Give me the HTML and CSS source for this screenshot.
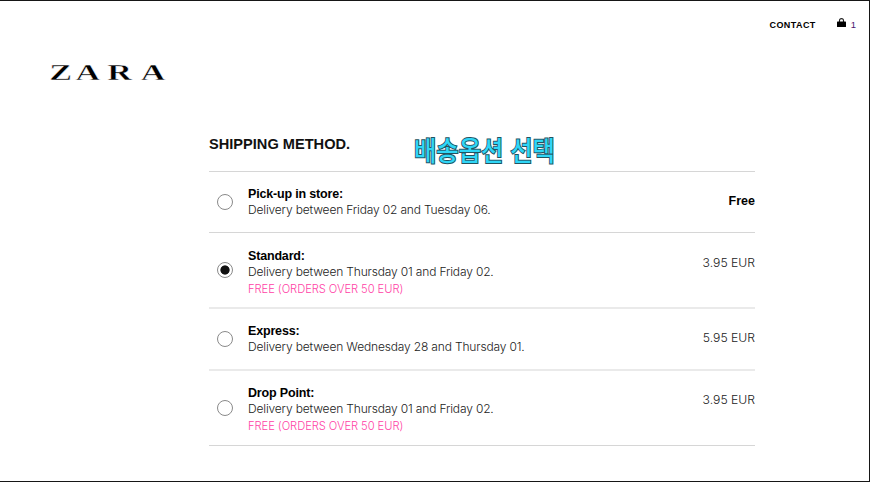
FILE: index.html
```html
<!DOCTYPE html>
<html lang="en">

<head>
    <meta charset="UTF-8">
    <meta name="viewport" content="width=device-width, initial-scale=1.0">
    <title>Shipping method</title>
    <link rel="stylesheet" href="styles.css">
</head>

<body>
    <div class="page">
        <!-- Top navigation -->
        <nav class="top-nav">
            <a class="contact" href="#">CONTACT</a>
            <a class="bag" href="#">
                <svg width="9" height="10" viewBox="0 0 9 10">
                    <path d="M2.5 4V2.6a2 2 0 0 1 4 0V4" fill="none" stroke="#222" stroke-width="1.1" />
                    <rect x="0" y="3.6" width="9" height="5.4" rx="0.6" fill="#000" />
                </svg>
                <span class="bag-count">1</span>
            </a>
        </nav>

        <header class="brand">
            <svg class="logo" width="122" height="28" viewBox="0 0 122 28">
                <text transform="scale(1.42 1)" x="0.2 18.6 41 64.6" y="22">ZARA</text>
            </svg>
        </header>

        <!-- Shipping options -->
        <main class="shipping">
            <h1 class="title">SHIPPING METHOD.</h1>
            <div class="caption" lang="ko">배송옵션 선택</div>

            <label class="option">
                <input type="radio" name="shipping">
                <div class="info">
                    <strong>Pick-up in store:</strong>
                    <p>Delivery between Friday 02 and Tuesday 06.</p>
                </div>
                <span class="price free">Free</span>
            </label>

            <label class="option tall soft">
                <input type="radio" name="shipping" checked>
                <div class="info">
                    <strong>Standard:</strong>
                    <p>Delivery between Thursday 01 and Friday 02.</p>
                    <p class="promo">FREE (ORDERS OVER 50 EUR)</p>
                </div>
                <span class="price">3.95 EUR</span>
            </label>

            <label class="option soft">
                <input type="radio" name="shipping">
                <div class="info">
                    <strong>Express:</strong>
                    <p>Delivery between Wednesday 28 and Thursday 01.</p>
                </div>
                <span class="price">5.95 EUR</span>
            </label>

            <label class="option tall last">
                <input type="radio" name="shipping">
                <div class="info">
                    <strong>Drop Point:</strong>
                    <p>Delivery between Thursday 01 and Friday 02.</p>
                    <p class="promo">FREE (ORDERS OVER 50 EUR)</p>
                </div>
                <span class="price">3.95 EUR</span>
            </label>
        </main>
    </div>
</body>

</html>
```
FILE: styles.css
```css
* {
    box-sizing: border-box;
}

body {
    margin: 0;
    background-color: #fff;
    color: #000;
    font-family: "Liberation Sans", Arial, sans-serif;
}

.page {
    height: 482px;
    overflow: hidden;
    border: 1px solid #161616;
    border-left: none;
}

.top-nav {
    display: flex;
    justify-content: flex-end;
    align-items: center;
    height: 46px;
    padding-right: 13px;
}

.top-nav a {
    color: #000;
    text-decoration: none;
}

.contact {
    margin: 2px 21px 0 0;
    font-size: 9px;
    font-weight: bold;
    letter-spacing: 0.4px;
}

.bag {
    display: flex;
    align-items: center;
    gap: 5px;
}

.bag svg {
    margin-top: -3px;
}

.top-nav .bag-count {
    color: #4b1670;
    font-size: 9.5px;
}

.brand {
    padding: 11px 0 0 49px;
}

.logo {
    display: block;
}

.logo text {
    fill: #000;
    stroke: #fff;
    stroke-width: 0.4px;
    font-family: "Liberation Serif", serif;
    font-size: 24px;
    font-weight: bold;
}

.shipping {
    position: relative;
    width: 546px;
    margin: 48px 0 0 209px;
}

.title {
    height: 38px;
    margin: 0;
    border-bottom: 1px solid #d6d6d6;
    color: #111;
    font-size: 14.6px;
    line-height: 20px;
}

.caption {
    position: absolute;
    top: -2px;
    left: 205px;
    color: #2fd6f6;
    font-family: "Noto Sans CJK KR", sans-serif;
    font-size: 27px;
    font-weight: 500;
    line-height: 36px;
    white-space: nowrap;
    transform: scaleX(0.9);
    transform-origin: left;
    -webkit-text-stroke: 2px #22535f;
    paint-order: stroke fill;
}

.option {
    display: flex;
    height: 61px;
    padding-top: 14px;
    border-bottom: 1px solid #d6d6d6;
}

.option.tall {
    height: 76px;
    padding-top: 15px;
}

.option.soft {
    border-bottom: 2px solid #eaeaea;
}

.option.soft:not(.tall) {
    height: 62px;
}

.option.last {
    height: 75px;
    padding-top: 14px;
}

.option input {
    appearance: none;
    flex-shrink: 0;
    align-self: center;
    width: 16px;
    height: 16px;
    margin: -15px 15px 0 8px;
    border: 1px solid #8a8a8a;
    border-radius: 50%;
}

.option input:checked {
    background: radial-gradient(circle, #111 4.2px, transparent 5px);
}

.info {
    flex: 1;
    line-height: 16px;
}

.info strong {
    display: block;
    font-size: 12.5px;
    letter-spacing: -0.17px;
}

.info p {
    margin: 0;
    color: #222;
    font-family: Inter, sans-serif;
    font-size: 12px;
    font-weight: 300;
    letter-spacing: -0.16px;
    line-height: 15px;
}

.info .promo {
    margin-top: 3px;
    color: #ff3fa6;
    font-size: 11.2px;
    letter-spacing: -0.06px;
}

.price {
    margin-top: 7px;
    color: #222;
    font-family: Inter, sans-serif;
    font-size: 12.2px;
    font-weight: 300;
    line-height: 16px;
}

.price.free {
    color: #000;
    font-family: "Liberation Sans", Arial, sans-serif;
    font-size: 12.5px;
    font-weight: bold;
}
```
